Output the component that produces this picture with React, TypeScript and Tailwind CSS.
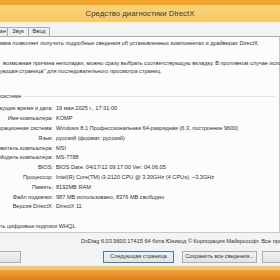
// DirectX diagnostic tool — system tab (cropped window)

const rows: [string, string][] = [
    ['Текущие время и дата:', '19 мая 2025 г., 17:31:00'],
    ['Имя компьютера:', 'KOMP'],
    ['Операционная система:', 'Windows 8.1 Профессиональная 64-разрядная (6.3, построение 9600)'],
    ['Язык:', 'русский (формат: русский)'],
    ['Изготовитель компьютера:', 'MSI'],
    ['Модель компьютера:', 'MS-7788'],
    ['BIOS:', 'BIOS Date: 04/17/12 09:17:00 Ver: 04.06.05'],
    ['Процессор:', 'Intel(R) Core(TM) i3-2120 CPU @ 3.30GHz (4 CPUs), ~3.3GHz'],
    ['Память:', '8192MB RAM'],
    ['Файл подкачки:', '987 MB использовано, 8376 MB свободно'],
    ['Версия DirectX:', 'DirectX 11'],
];

export default function App() {
    return (
        <div className="flex h-[280px] w-[280px] flex-col overflow-hidden bg-[#f3f3f3] font-['Liberation_Sans',Arial,sans-serif] text-[5.6px] leading-none text-[#2f2f2f]">
            {/* Title bar */}
            <div className="h-[5px] shrink-0 bg-[#f2a52c]" />
            <div className="flex h-[17px] shrink-0 items-center justify-center bg-gradient-to-b from-[#fad27a] to-[#f8c964] text-[7.8px] text-[#3a3a3a]">
                Средство диагностики DirectX
            </div>

            {/* Tabs */}
            <div className="mt-[5px] flex h-[10px] shrink-0 items-stretch">
                <div className="flex w-[8px] items-center justify-end border border-l-0 border-[#acacac] bg-[#f0f0f0] pr-[1px]">ан</div>
                <div className="flex w-[21px] items-center justify-center border border-l-0 border-[#acacac] bg-[#f0f0f0]">Звук</div>
                <div className="flex w-[21px] items-center justify-center border border-l-0 border-[#acacac] bg-[#f0f0f0]">Ввод</div>
                <div className="flex-1 border-b border-[#acacac]" />
            </div>

            {/* Tab panel */}
            <div className="flex h-[196px] shrink-0 flex-col border-b border-r border-[#c9c9c9] bg-[#fcfcfc] pr-[4px]">
                <div className="mt-[4px] whitespace-nowrap">мма позволяет получить подробные сведения об установленных компонентах и драйверах DirectX.</div>
                <div className="mt-[14px] whitespace-nowrap pl-[3px]">возможная причина неполадки, можно сразу выбрать соответствующую вкладку. В противном случае используйте кнопку</div>
                <div className="mt-[3px] whitespace-nowrap">ующая страница" для последовательного просмотра страниц.</div>

                {/* System info group */}
                <div className="mt-[19px] flex items-center gap-[3px]">
                    <span className="whitespace-nowrap">системе</span>
                    <div className="h-px flex-1 bg-[#e2e2e2]" />
                </div>
                <div className="mt-[5px] flex flex-col">
                    {rows.map(([label, value]) => (
                        <div key={label} className="flex h-[9.8px] items-center">
                            <div className="flex w-[53px] shrink-0 justify-end overflow-visible">
                                <span className="whitespace-nowrap">{label}</span>
                            </div>
                            <span className="ml-[3px] whitespace-nowrap">{value}</span>
                        </div>
                    ))}
                </div>

                <div className="mt-[12px] whitespace-nowrap">ть цифровые подписи WHQL</div>
            </div>

            {/* Footer */}
            <div className="mt-[6px] whitespace-nowrap pl-[81px]">DxDiag 6.03.9600.17415 64 бита Юникод © Корпорация Майкрософт. Все права защищены.</div>
            <div className="mt-[6px] flex h-[12px] shrink-0 items-stretch">
                <div className="w-[21px] border border-l-0 border-[#adadad] bg-gradient-to-b from-[#f2f2f2] to-[#e3e3e3]" />
                <div className="ml-[82px] flex w-[71px] items-center justify-center whitespace-nowrap border border-[#3c7fb1] bg-gradient-to-b from-[#f2f2f2] to-[#e3e3e3]">Следующая страница</div>
                <div className="ml-[8px] flex w-[75px] items-center justify-center whitespace-nowrap border border-[#adadad] bg-gradient-to-b from-[#f2f2f2] to-[#e3e3e3]">Сохранить все сведения...</div>
                <div className="ml-[5px] flex-1 border border-r-0 border-[#adadad] bg-gradient-to-b from-[#f2f2f2] to-[#e3e3e3]" />
            </div>

            {/* Window frame + taskbar */}
            <div className="mt-[3px] h-[4px] shrink-0 bg-[#f7c666]" />
            <div className="flex-1 bg-gradient-to-b from-[#f0a640] to-[#e07a12]" />
        </div>
    );
}
